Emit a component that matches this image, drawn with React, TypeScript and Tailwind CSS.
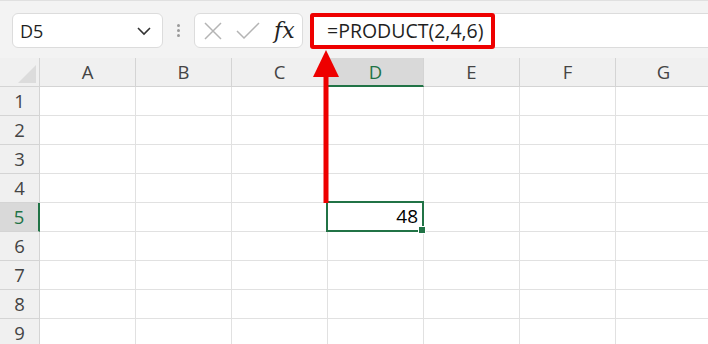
import React from 'react';

const cols = ['A', 'B', 'C', 'D', 'E', 'F', 'G'];
const rows = [1, 2, 3, 4, 5, 6, 7, 8, 9];

const App = () => {
  return (
    <div className="relative w-[708px] h-[344px] overflow-hidden bg-white font-['Open_Sans',sans-serif] text-[#1f1f1f]">
      {/* formula bar */}
      <div className="h-[58px] bg-[#f3f3f3] border-t border-[#e0e0e0] flex items-start pt-[12px] pl-[12px]">
        <div className="w-[151px] h-[35px] bg-white border border-[#dcdcdc] rounded-[6px] flex items-center justify-between pl-[7px] pr-[10px]">
          <span className="text-[18px] leading-none">D5</span>
          <svg width="16" height="10" viewBox="0 0 16 10" fill="none" stroke="#333" strokeWidth="1.6">
            <path d="M2 2 L8 8 L14 2" />
          </svg>
        </div>
        <div className="w-[31px] h-[35px] flex flex-col items-center justify-center gap-[2px]">
          <span className="w-[3px] h-[3px] bg-[#9a9a9a] rounded-full" />
          <span className="w-[3px] h-[3px] bg-[#9a9a9a] rounded-full" />
          <span className="w-[3px] h-[3px] bg-[#9a9a9a] rounded-full" />
        </div>
        <div className="w-[109px] h-[35px] bg-white border border-[#dcdcdc] rounded-[6px] flex items-center pl-[8px] gap-[12px]">
          <svg width="20" height="20" viewBox="0 0 20 20" fill="none" stroke="#b4b4b4" strokeWidth="1.5">
            <path d="M2 2 L18 18 M18 2 L2 18" />
          </svg>
          <svg width="26" height="20" viewBox="0 0 26 20" fill="none" stroke="#b4b4b4" strokeWidth="1.5">
            <path d="M2 10 L9 17 L24 2" />
          </svg>
          <span className="ml-[1px] font-['DejaVu_Serif',serif] italic text-[22px] leading-none text-[#222]">
            fx
          </span>
        </div>
        <div className="ml-[8px] flex-1 h-[35px] bg-white border-y border-[#dcdcdc] flex items-center pl-[16px]">
          <span className="text-[19.5px] leading-none">=PRODUCT(2,4,6)</span>
        </div>
      </div>

      {/* grid */}
      <div className="grid grid-cols-[40px_repeat(7,96px)] text-[18.5px] text-[#444]">
        <div className="h-[29px] bg-[#f0f0f0] border-r border-b border-[#d4d4d4] relative">
          <div className="absolute right-[3px] bottom-[3px] w-0 h-0 border-l-[18px] border-l-transparent border-b-[18px] border-b-[#dcdcdc]" />
        </div>
        {cols.map((c) => (
          <div
            key={c}
            className={
              c === 'D'
                ? 'h-[29px] bg-[#d9d9d9] border-r border-[#d4d4d4] border-b-2 border-b-[#217346] flex items-center justify-center text-[#217346]'
                : 'h-[29px] bg-[#f0f0f0] border-r border-b border-[#d4d4d4] flex items-center justify-center'
            }
          >
            {c}
          </div>
        ))}
        {rows.map((r) => (
          <React.Fragment key={r}>
            <div
              className={
                r === 5
                  ? 'h-[29px] bg-[#d9d9d9] border-b border-[#d4d4d4] border-r-2 border-r-[#217346] flex items-center justify-center text-[#217346]'
                  : 'h-[29px] bg-[#f0f0f0] border-r border-b border-[#d4d4d4] flex items-center justify-center'
              }
            >
              {r}
            </div>
            {cols.map((c) => (
              <div key={c} className="h-[29px] border-r border-b border-[#e1e1e1]" />
            ))}
          </React.Fragment>
        ))}
      </div>

      {/* selected cell D5 */}
      <div className="absolute left-[326px] top-[201px] w-[98px] h-[31px] border-2 border-[#217346] flex items-center justify-end pr-[4px] text-[19px] text-black">
        48
        <div className="absolute right-[-4px] bottom-[-4px] w-[6px] h-[6px] bg-[#217346] border border-white box-content" />
      </div>

      {/* annotation */}
      <div className="absolute left-[310px] top-[13px] w-[185px] h-[36px] border-4 border-[#ee0000] rounded-[3px]" />
      <svg className="absolute left-[310px] top-[48px]" width="32" height="158" viewBox="0 0 32 158">
        <polygon points="16,2 3,29 29,29" fill="#ee0000" />
        <rect x="13.5" y="28" width="5" height="127" fill="#ee0000" />
      </svg>
    </div>
  );
};

export default App;
